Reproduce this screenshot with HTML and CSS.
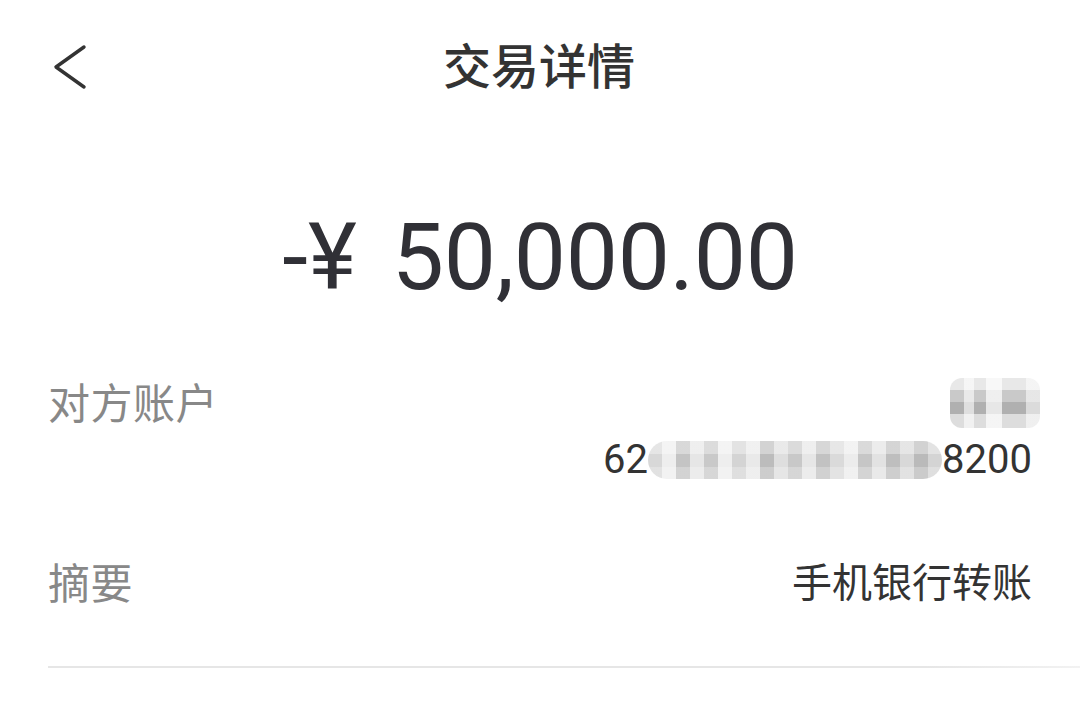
FILE: index.html
```html
<!DOCTYPE html>
<html lang="zh-CN">
<head>
<meta charset="utf-8">
<title>交易详情</title>
<link rel="stylesheet" href="styles.css">
</head>
<body>
<div class="page">
  <header class="header">
    <div class="back">
      <svg width="36" height="46" viewBox="0 0 36 46"><path d="M32 3 L4 23 L32 43" fill="none" stroke="#333" stroke-width="3.4" stroke-linecap="round" stroke-linejoin="round"/></svg>
    </div>
    <h1 class="title">交易详情</h1>
    <div class="spacer"></div>
  </header>

  <section class="amount"><span class="sign">-¥</span><span class="num">50,000.00</span></section>

  <div class="row row-account">
    <div class="label">对方账户</div>
    <div class="value-stack">
      <div class="blur-name"></div>
      <div class="acct"><span>62</span><span class="blur-acct"></span><span>8200</span></div>
    </div>
  </div>

  <div class="row row-memo">
    <div class="label">摘要</div>
    <div class="value">手机银行转账</div>
  </div>

  <div class="divider"></div>
</div>
</body>
</html>
```

FILE: styles.css
```css
* { box-sizing: border-box; }
html, body { margin: 0; padding: 0; background: #fff; }
body {
  width: 1080px;
  height: 708px;
  overflow: hidden;
  font-family: "Noto Sans CJK SC", "Noto Sans", sans-serif;
}
.page { display: flex; flex-direction: column; }

.header {
  height: 132px;
  padding: 0 48px 0 52px;
  display: grid;
  grid-template-columns: 1fr auto 1fr;
  align-items: center;
}
.back { display: flex; align-items: center; margin-top: 2px; }
.title {
  margin: 0 0 6px 0;
  font-size: 48px;
  line-height: 1;
  font-weight: 500;
  color: #333;
  transform: translateX(-3px);
}

.amount {
  height: 248px;
  padding-top: 79px;
  display: flex;
  justify-content: center;
  font-family: Roboto, "Noto Sans", sans-serif;
  font-size: 93px;
  line-height: 1;
  color: #303036;
}
.sign { margin-right: 35px; }
.num { letter-spacing: -0.3px; }

.row {
  display: flex;
  justify-content: space-between;
  padding: 0 48px;
}
.label {
  font-size: 42px;
  line-height: 1;
  color: #888;
  letter-spacing: 0.5px;
}
.row-account { height: 178px; padding-top: 0; }
.value-stack { display: flex; flex-direction: column; align-items: flex-end; }
.blur-name {
  width: 90px;
  height: 50px;
  margin-top: -2px;
  margin-right: -8px;
  border-radius: 12px;
  background:
    linear-gradient(90deg, rgba(255,255,255,0) 0 14px, rgba(255,255,255,0.6) 14px 24px, rgba(255,255,255,0) 24px 36px, rgba(255,255,255,0.7) 36px 52px, rgba(255,255,255,0) 52px 76px, rgba(255,255,255,0.55) 76px 100%),
    linear-gradient(180deg, #e8e8e8 0 12px, #c9c9c9 12px 24px, #b0b0b0 24px 36px, #dddddd 36px 100%);
}
.acct {
  display: flex;
  align-items: center;
  margin-top: 12px;
  font-family: Roboto, "Noto Sans", sans-serif;
  font-size: 40px;
  line-height: 1;
  color: #333;
}
.blur-acct {
  display: inline-block;
  width: 294px;
  height: 38px;
  border-radius: 19px;
  background:
    linear-gradient(180deg, rgba(255,255,255,0.35) 0 13px, rgba(0,0,0,0) 13px 26px, rgba(255,255,255,0.25) 26px 100%),
    linear-gradient(90deg, #d8d8d8 0 14px, #eeeeee 14px 28px, #c4c4c4 28px 42px, #e6e6e6 42px 56px, #c9c9c9 56px 70px, #eeeeee 70px 84px, #d4d4d4 84px 98px, #e9e9e9 98px 112px, #bcbcbc 112px 126px, #dedede 126px 140px, #c8c8c8 140px 154px, #e6e6e6 154px 168px, #c2c2c2 168px 182px, #dadada 182px 196px, #ececec 196px 210px, #c6c6c6 210px 224px, #e2e2e2 224px 238px, #bebebe 238px 252px, #d8d8d8 252px 266px, #bababa 266px 280px, #d4d4d4 280px 100%);
}
.row-memo { padding-top: 2px; height: 108px; }
.value {
  font-size: 40px;
  line-height: 1;
  color: #333;
}

.divider {
  margin-left: 48px;
  height: 2px;
  background: linear-gradient(90deg, #e6e6e6 0 85%, #f2f2f2 100%);
}
```
